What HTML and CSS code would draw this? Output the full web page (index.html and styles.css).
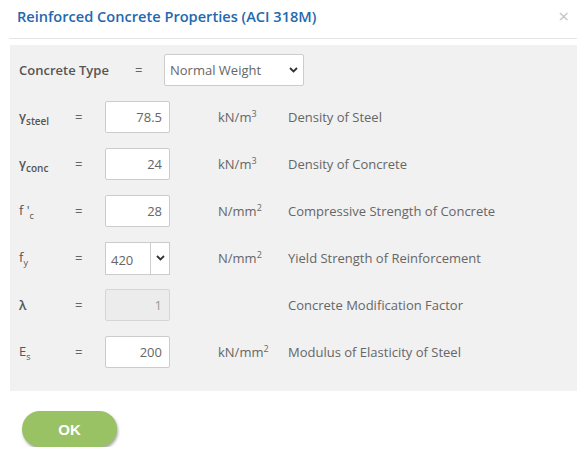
FILE: index.html
```html
<!DOCTYPE html>
<html lang="en">
  <head>
    <meta charset="UTF-8" />
    <meta name="viewport" content="width=device-width, initial-scale=1.0" />
    <title>Reinforced Concrete Properties</title>
    <link rel="stylesheet" href="styles.css">
  </head>
  <body>
    <div class="dialog">
      <header class="dialog-header">
        <h1 class="dialog-title">Reinforced Concrete Properties (ACI 318M)</h1>
        <span class="close">&times;</span>
      </header>

      <div class="panel">
        <div class="row row-type">
          <div class="label label-type">Concrete Type</div>
          <div class="eq">=</div>
          <div class="select select-type">
            <span>Normal Weight</span>
            <svg class="chev" width="9" height="6" viewBox="0 0 9 6"><polyline points="1,1 4.5,4.5 8,1" fill="none" stroke="#333" stroke-width="1.8"/></svg>
          </div>
        </div>

        <div class="row">
          <div class="label sym">&gamma;<sub>steel</sub></div>
          <div class="eq">=</div>
          <input class="num" type="text" value="78.5" />
          <div class="unit">kN/m<sup>3</sup></div>
          <div class="desc">Density of Steel</div>
        </div>

        <div class="row">
          <div class="label sym">&gamma;<sub>conc</sub></div>
          <div class="eq">=</div>
          <input class="num" type="text" value="24" />
          <div class="unit">kN/m<sup>3</sup></div>
          <div class="desc">Density of Concrete</div>
        </div>

        <div class="row">
          <div class="label">f '<sub>c</sub></div>
          <div class="eq">=</div>
          <input class="num" type="text" value="28" />
          <div class="unit">N/mm<sup>2</sup></div>
          <div class="desc">Compressive Strength of Concrete</div>
        </div>

        <div class="row">
          <div class="label">f<sub>y</sub></div>
          <div class="eq">=</div>
          <div class="combo">
            <span class="combo-value">420</span>
            <span class="combo-btn">
              <svg width="9" height="6" viewBox="0 0 9 6"><polyline points="1,1 4.5,4.5 8,1" fill="none" stroke="#333" stroke-width="1.8"/></svg>
            </span>
          </div>
          <div class="unit">N/mm<sup>2</sup></div>
          <div class="desc">Yield Strength of Reinforcement</div>
        </div>

        <div class="row">
          <div class="label sym">&lambda;</div>
          <div class="eq">=</div>
          <input class="num" type="text" value="1" disabled />
          <div class="unit"></div>
          <div class="desc">Concrete Modification Factor</div>
        </div>

        <div class="row">
          <div class="label">E<sub>s</sub></div>
          <div class="eq">=</div>
          <input class="num" type="text" value="200" />
          <div class="unit">kN/mm<sup>2</sup></div>
          <div class="desc">Modulus of Elasticity of Steel</div>
        </div>
      </div>

      <div class="footer">
        <button class="ok-btn">OK</button>
      </div>
    </div>
  </body>
</html>
```

FILE: styles.css
```css
body {
  margin: 0;
  font-family: "Open Sans", sans-serif;
  background: #fff;
  color: #555;
}

.dialog {
  padding: 0 8px 0 10px;
}

.dialog-header {
  display: flex;
  justify-content: space-between;
  align-items: center;
  height: 38px;
  padding: 0 8px;
  margin-left: -1px;
  border-bottom: 1px solid #e5e5e5;
}

.dialog-title {
  margin: 0;
  margin-top: -6px;
  font-size: 14.6px;
  font-weight: 600;
  color: #2468ad;
}

.close {
  margin-top: -6px;
  font-size: 19px;
  color: #c4c4c4;
}

.panel {
  margin-top: 6px;
  background: #f1f1f1;
  padding: 9px 9px 23px 9px;
}

.row {
  display: flex;
  align-items: center;
  height: 32px;
  margin-top: 15px;
  font-size: 13px;
}

.row-type {
  margin-top: 0;
}

.label {
  width: 56px;
  color: #555;
}

.label-type {
  width: 116px;
  font-weight: 600;
}

.sym {
  font-weight: 600;
}

.label sub {
  font-size: 9px;
}

.sym sub {
  font-size: 10px;
}

.eq {
  width: 30px;
  color: #666;
}

.row-type .eq {
  width: 29px;
}

.select {
  display: flex;
  justify-content: space-between;
  align-items: center;
  box-sizing: border-box;
  height: 32px;
  background: #fff;
  border: 1px solid #ccc;
  border-radius: 2px;
  padding: 0 5px 0 5px;
}

.select-type {
  width: 140px;
  font-size: 13px;
  color: #666;
}

.num {
  box-sizing: border-box;
  width: 65px;
  height: 32px;
  border: 1px solid #ccc;
  border-radius: 2px;
  padding: 0 7px;
  text-align: right;
  font-family: inherit;
  font-size: 13px;
  color: #666;
  background: #fff;
}

.num:disabled {
  background: #ececec;
  border-color: #d6d6d6;
  color: #999;
}

.combo {
  display: flex;
  box-sizing: border-box;
  width: 65px;
  height: 33px;
  border: 1px solid #ccc;
  background: #fff;
  color: #666;
}

.combo-value {
  flex: 1;
  display: flex;
  align-items: center;
  padding-left: 5px;
  padding-top: 3px;
}

.combo-btn {
  display: flex;
  align-items: center;
  justify-content: center;
  width: 18px;
  border-left: 1px solid #ccc;
}

.unit {
  width: 70px;
  margin-left: 48px;
  color: #666;
}

.unit sup {
  font-size: 9px;
}

.desc {
  color: #666;
}

.footer {
  padding: 20px 0 0 12px;
}

.ok-btn {
  width: 95px;
  height: 36px;
  border: none;
  border-radius: 18px;
  background: #98c264;
  color: #fff;
  font-family: "Liberation Sans", sans-serif;
  font-weight: bold;
  font-size: 15px;
  box-shadow: 1px 2px 3px rgba(0, 0, 0, 0.35);
  cursor: pointer;
}
```
